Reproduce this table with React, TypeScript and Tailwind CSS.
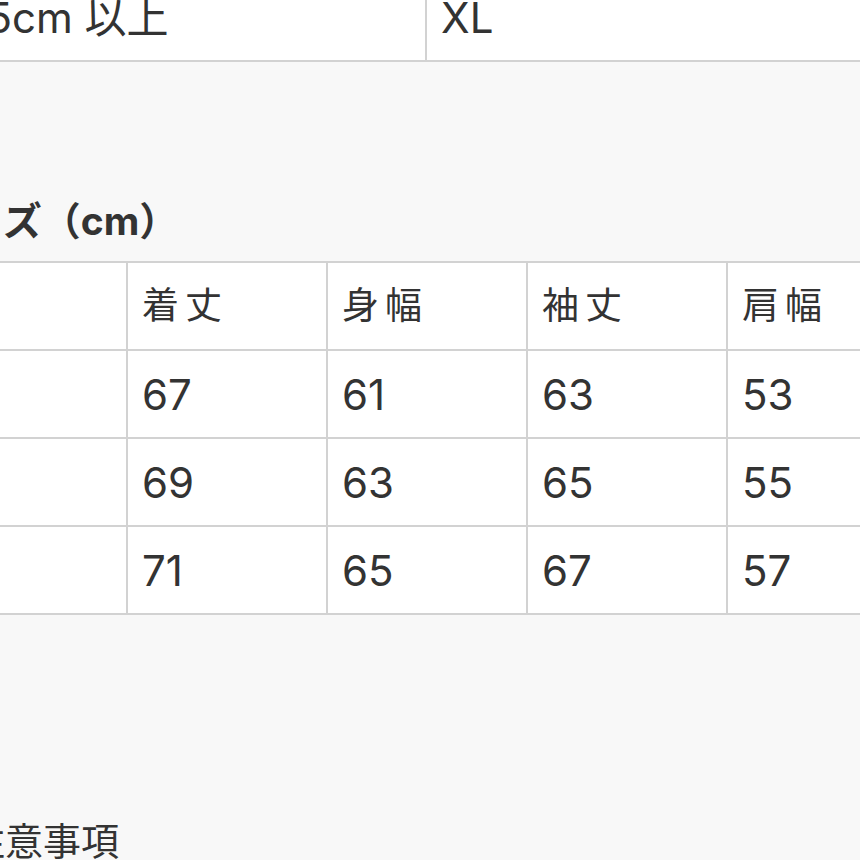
import React from "react";

const fontStack = 'font-["Inter","Noto_Sans_CJK_JP",sans-serif]';

// 行データ（サイズ別の実寸）
const rows = [
  { size: "S", values: ["67", "61", "63", "53"] },
  { size: "M", values: ["69", "63", "65", "55"] },
  { size: "L", values: ["71", "65", "67", "57"] },
];

const headers = ["着丈", "身幅", "袖丈", "肩幅"];

const App = () => {
  return (
    <div className={`h-[860px] w-[860px] overflow-hidden bg-[#f8f8f8] text-[#333333] ${fontStack}`}>
      <div className="-ml-[74px] w-[1000px]">
        {/* 身長とサイズの目安（上端が切れている表） */}
        <div className="-mt-[28px] border-l-2 border-t-2 border-[#d2d2d2]">
          <div className="flex">
            <div className="flex h-[88px] w-[500px] items-center border-b-2 border-r-2 border-[#d2d2d2] bg-white pl-[18px] text-[42px]">
              175cm 以上
            </div>
            <div className="flex h-[88px] w-[500px] items-center border-b-2 border-r-2 border-[#d2d2d2] bg-white pl-[14px] text-[42px]">
              XL
            </div>
          </div>
        </div>

        <h2 className="mt-[136px] pl-[0px] text-[39px] font-bold leading-[46px]">
          サイズ（cm）
        </h2>

        <div className="mt-[17px] w-[1002px] border-l-2 border-t-2 border-[#d2d2d2]">
          <div className="flex">
            <div className="h-[88px] w-[200px] border-b-2 border-r-2 border-[#d2d2d2] bg-white" />
            {headers.map((h) => (
              <div
                key={h}
                className="flex h-[88px] w-[200px] items-center border-b-2 border-r-2 border-[#d2d2d2] bg-white pl-[14px] text-[37px] tracking-[6px]"
              >
                {h}
              </div>
            ))}
          </div>
          {rows.map((row) => (
            <div key={row.size} className="flex">
              <div className="flex h-[88px] w-[200px] items-center border-b-2 border-r-2 border-[#d2d2d2] bg-white pl-[14px] text-[42px]">
                {row.size}
              </div>
              {row.values.map((v, i) => (
                <div
                  key={i}
                  className="flex h-[88px] w-[200px] items-center border-b-2 border-r-2 border-[#d2d2d2] bg-white pl-[14px] text-[42px]"
                >
                  {v}
                </div>
              ))}
            </div>
          ))}
        </div>

        <p className="ml-[41px] mt-[203px] text-[38px] leading-[46px]">注意事項</p>
      </div>
    </div>
  );
};

export default App;
